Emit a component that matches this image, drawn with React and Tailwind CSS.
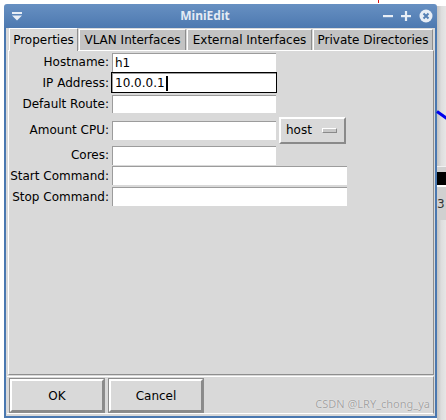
import React from 'react'

// Tk-style entry box
const Entry = ({ width, value, focused }) => {
    if (focused) {
        return (
            <div className={`${width} h-[21px] border border-black flex`}>
                <div className="flex-1 bg-white border-t border-l border-[#9c9c9c] flex items-center pl-[2px] text-black">
                    <span>{value}</span>
                    <span className="ml-[1px] w-[2px] h-[15px] bg-black" />
                </div>
            </div>
        )
    }
    return (
        <div className={`${width} h-[19px] bg-white border-t border-l border-[#9c9c9c] flex items-center pl-[2px] text-black`}>
            {value}
        </div>
    )
}

const Row = ({ label, height, children }) => (
    <div className={`flex items-center ${height}`}>
        <div className="w-[100px] text-right text-black whitespace-nowrap">{label}</div>
        <div className="ml-[3px] flex items-center">{children}</div>
    </div>
)

const tabs = [
    { name: 'Properties', w: 'w-[69px]', active: true },
    { name: 'VLAN Interfaces', w: 'w-[107px]' },
    { name: 'External Interfaces', w: 'w-[125px]' },
    { name: 'Private Directories', w: 'w-[120px]' },
]

const App = () => {
    return (
        <div className="relative w-[446px] h-[420px] bg-white overflow-hidden font-['DejaVu_Sans',sans-serif] text-[12px] leading-none">
            {/* desktop behind the window, right edge */}
            <div className="absolute left-[437px] top-[6px] w-[9px] h-[414px] bg-gradient-to-r from-[#c4c4c4] via-[#dedede] to-[#e6e6e6]" />
            <div className="absolute left-[437px] top-[110px] w-[14px] h-[3px] bg-[#0000ee] rotate-[35deg] origin-left" />
            <div className="absolute left-[437px] top-[166px] w-[9px] h-[54px] bg-[#d0d0d0] border-t border-[#f0f0f0]">
                <div className="mt-[5px] h-[13px] bg-black" />
                <div className="h-[2px] bg-white" />
                <div className="mt-[11px] text-[12px] text-[#333]">3</div>
            </div>
            <div className="absolute left-[378px] top-0 w-[1px] h-[3px] bg-[#e01010]" />

            {/* window */}
            <div className="ml-[4px] mt-[4px] w-[433px] h-[414px] flex flex-col">
                {/* title bar */}
                <div className="h-[24px] flex items-center bg-gradient-to-b from-[#6790c2] to-[#4d79b0] rounded-t-[3px] text-[#e4ebf4]">
                    <div className="w-[24px] flex justify-center pl-[2px]">
                        <svg width="10" height="9" viewBox="0 0 10 9">
                            <rect x="0" y="0" width="10" height="2" fill="#e8eef6" />
                            <polygon points="0,3.5 10,3.5 5,8.5" fill="#e8eef6" />
                        </svg>
                    </div>
                    <div className="flex-1 text-center font-['Noto_Sans',sans-serif] font-bold text-[12px] pl-[2px]">
                        MiniEdit
                    </div>
                    <div className="w-[57px] flex items-center gap-[8px] pl-[3px]">
                        <svg width="10" height="10" viewBox="0 0 10 10">
                            <rect x="0" y="4" width="10" height="2.2" fill="#e8eef6" />
                        </svg>
                        <svg width="10" height="10" viewBox="0 0 10 10">
                            <rect x="0" y="4" width="10" height="2.2" fill="#e8eef6" />
                            <rect x="3.9" y="0" width="2.2" height="10" fill="#e8eef6" />
                        </svg>
                        <svg width="14" height="14" viewBox="0 0 14 14">
                            <circle cx="7" cy="7" r="6.5" fill="#e8eef6" />
                            <path d="M4.5 4.5 L9.5 9.5 M9.5 4.5 L4.5 9.5" stroke="#5580b5" strokeWidth="2" />
                        </svg>
                    </div>
                </div>

                {/* body */}
                <div className="flex-1 flex flex-col bg-[#d9d9d9] border-x-2 border-b-2 border-[#4a78b0]">
                    {/* notebook tabs */}
                    <div className="flex items-end gap-[1px] pl-[3px] h-[22px]">
                        {tabs.map(t => (
                            t.active ? (
                                <div
                                    key={t.name}
                                    className={`${t.w} h-[23px] -mb-[1px] relative z-10 bg-[#d9d9d9] border-t border-l border-white border-r border-r-[#8e8e8e] flex items-center justify-center pb-[1px] text-black`}
                                >
                                    {t.name}
                                </div>
                            ) : (
                                <div
                                    key={t.name}
                                    className={`${t.w} h-[21px] bg-[#c3c3c3] border-t border-l border-white border-r border-r-[#8e8e8e] flex items-center justify-center text-black`}
                                >
                                    {t.name}
                                </div>
                            )
                        ))}
                    </div>

                    {/* notebook pane */}
                    <div className="ml-[2px] w-[426px] h-[325px] border-t border-l border-white border-r border-b border-r-[#8e8e8e] border-b-[#8e8e8e] pt-[1px]">
                        <Row label="Hostname:" height="h-[20px]">
                            <Entry width="w-[164px]" value="h1" />
                        </Row>
                        <Row label="IP Address:" height="h-[21px]">
                            <div className="-ml-[1px]">
                                <Entry width="w-[166px]" value="10.0.0.1" focused />
                            </div>
                        </Row>
                        <Row label="Default Route:" height="h-[22px]">
                            <div className="w-[164px] h-[18px] bg-white border-t border-l border-[#9c9c9c]" />
                        </Row>
                        <Row label="Amount CPU:" height="h-[30px]">
                            <Entry width="w-[164px]" value="" />
                            <div className="ml-[3px] w-[67px] h-[27px] bg-[#d9d9d9] border-2 border-t-white border-l-white border-b-[#8a8a8a] border-r-[#8a8a8a] flex items-center pl-[5px] text-black">
                                <span>host</span>
                                <div className="ml-[10px] w-[15px] h-[5px] bg-[#c8c8c8] border-t border-l border-white border-b border-r border-b-[#8a8a8a] border-r-[#8a8a8a]" />
                            </div>
                        </Row>
                        <Row label="Cores:" height="h-[20px]">
                            <Entry width="w-[164px]" value="" />
                        </Row>
                        <Row label="Start Command:" height="h-[21px]">
                            <Entry width="w-[235px]" value="" />
                        </Row>
                        <Row label="Stop Command:" height="h-[21px]">
                            <Entry width="w-[235px]" value="" />
                        </Row>
                    </div>

                    {/* button bar */}
                    <div className="relative mt-[1px] ml-[1px] w-[427px] h-[38px] border-t border-white border-r border-r-[#8e8e8e] border-b border-b-white flex items-start gap-[3px] pt-[1px] pl-[2px]">
                        <div className="w-[96px] h-[35px] border border-[#8c8c8c] flex">
                            <div className="flex-1 border-2 border-t-white border-l-white border-b-[#8a8a8a] border-r-[#8a8a8a] bg-[#d9d9d9] flex items-center justify-center text-black">
                                OK
                            </div>
                        </div>
                        <div className="w-[96px] h-[35px] border border-[#8c8c8c] flex">
                            <div className="flex-1 border-2 border-t-white border-l-white border-b-[#8a8a8a] border-r-[#8a8a8a] bg-[#d9d9d9] flex items-center justify-center text-black">
                                Cancel
                            </div>
                        </div>
                        <div className="absolute right-[3px] bottom-[4px] font-['Noto_Sans',sans-serif] text-[11px] text-[#a3a3a3] [text-shadow:0_0_1px_#ffffff]">
                            CSDN @LRY_chong_ya
                        </div>
                    </div>
                </div>
            </div>
        </div>
    )
}

export default App
